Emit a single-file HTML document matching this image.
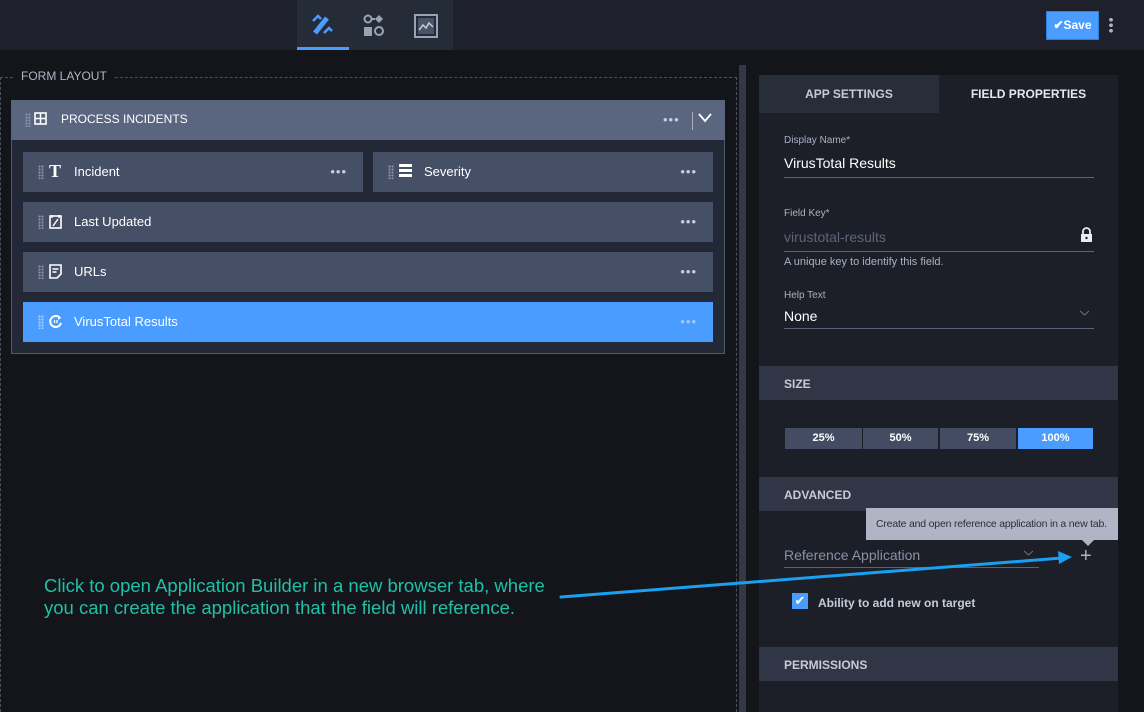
<!DOCTYPE html>
<html style="width:1144px;height:712px;overflow:hidden"><head><style>
*{box-sizing:border-box;margin:0;padding:0}
body{width:1144px;height:712px;background:#14151b;font-family:"Liberation Sans",sans-serif;position:relative;overflow:hidden;color:#fff}
.a{position:absolute}
.row{position:absolute;background:#454f65;height:40px;font-size:13px;display:flex;align-items:center;color:#fff}
.grip{position:absolute;left:15px;top:13px;width:6px;height:14px;background-image:radial-gradient(circle,#8a93a8 1px,transparent 1.2px);background-size:3px 3px}
.dots{position:absolute;right:16px;top:12px;color:#c8cedb;font-size:13px;letter-spacing:1px}
.lbl{position:absolute;left:51px;top:12px}
.hdr{position:absolute;left:759px;width:359px;height:34px;background:#313646;color:#c5cbd8;font-size:12px;font-weight:bold;padding:11px 0 0 25px}
.btn{position:absolute;top:428px;height:21px;background:#434c62;font-size:11px;font-weight:bold;text-align:center;line-height:21px}
.small{font-size:10px;color:#aab1c2;position:absolute;left:784px}
.ul{position:absolute;left:784px;width:310px;height:1px;background:#5a6278}
</style></head><body>
<div class="a" style="left:0;top:0;width:1144px;height:50px;background:#1e212b"></div>
<div class="a" style="left:297px;top:0;width:156px;height:50px;background:#262b38"></div>
<div class="a" style="left:297px;top:47px;width:52px;height:3px;background:#4a9dff"></div>
<svg class="a" style="left:310px;top:13px" width="26" height="24" viewBox="0 0 26 24"><path d="M5 20L17 5" stroke="#4a9dff" stroke-width="5" fill="none"/><path d="M3 8l5-5 3 3M14 20l5-5 3 3" stroke="#4a9dff" stroke-width="2.5" fill="none"/></svg>
<svg class="a" style="left:362px;top:14px" width="24" height="24"><circle cx="6" cy="5" r="3.5" stroke="#9aa3b5" stroke-width="2" fill="none"/><path d="M17 1l4 4-4 4-4-4z" fill="#9aa3b5"/><rect x="2" y="13" width="8" height="9" fill="#9aa3b5"/><circle cx="17" cy="17" r="4" stroke="#9aa3b5" stroke-width="2" fill="none"/><path d="M9 5h4" stroke="#9aa3b5" stroke-width="2"/></svg>
<svg class="a" style="left:414px;top:14px" width="24" height="24"><rect x="1" y="1" width="22" height="22" fill="none" stroke="#9aa3b5" stroke-width="2"/><rect x="4" y="4" width="16" height="16" fill="#4a5468"/><path d="M5 16l4-5 3 3 3-5 4 4" stroke="#c5cbd8" stroke-width="1.5" fill="none"/></svg>
<div class="a" style="left:1046px;top:11px;width:53px;height:29px;background:#4a9dff;border:1px solid #2b7fe0;font-size:12px;font-weight:bold;line-height:27px;text-align:center">✔Save</div>
<div class="a" style="left:1109px;top:17px;width:4px;height:16px;background-image:radial-gradient(circle,#aab1c2 1.8px,transparent 2px);background-size:4px 5.5px"></div>

<div class="a" style="left:0;top:77px;width:737px;height:640px;border:1px dashed #4a4f5e;border-bottom:none"></div>
<div class="a" style="left:15px;top:69px;background:#14151b;padding:0 6px;color:#aeb5c5;font-size:12px">FORM LAYOUT</div>
<div class="a" style="left:739px;top:65px;width:7px;height:647px;background:#333846"></div>

<div class="a" style="left:11px;top:100px;width:714px;height:254px;background:#232837;border:1px solid #4f5970"></div>
<div class="a" style="left:11px;top:100px;width:714px;height:40px;background:#5a6680"></div>
<div class="grip" style="left:25px;top:113px"></div>
<svg class="a" style="left:34px;top:112px" width="13" height="13"><rect x="1" y="1" width="11" height="11" fill="none" stroke="#fff" stroke-width="1.6"/><path d="M6.5 1v11M1 6.5h11" stroke="#fff" stroke-width="1.5"/></svg>
<div class="a" style="left:61px;top:112px;font-size:12px">PROCESS INCIDENTS</div>
<div class="a" style="left:663px;top:112px;color:#c8cedb;font-size:13px;letter-spacing:1px">•••</div>
<div class="a" style="left:692px;top:112px;width:1px;height:18px;background:#aab1c2"></div>
<svg class="a" style="left:698px;top:113px" width="14" height="10"><path d="M1 1l6 7 6-7" stroke="#fff" stroke-width="1.8" fill="none"/></svg>

<div class="row" style="left:23px;top:152px;width:340px"><div class="grip"></div><div class="a" style="left:26px;top:9px;font-family:'Liberation Serif',serif;font-weight:bold;font-size:18px">T</div><div class="lbl">Incident</div><div class="dots">•••</div></div>
<div class="row" style="left:373px;top:152px;width:340px"><div class="grip"></div><div class="a" style="left:26px;top:12px;width:13px;height:15px;background:repeating-linear-gradient(#fff 0 3px,transparent 3px 5px)"></div><div class="lbl">Severity</div><div class="dots">•••</div></div>
<div class="row" style="left:23px;top:202px;width:690px"><div class="grip"></div><svg class="a" style="left:26px;top:12px" width="13" height="15"><rect x="1" y="2" width="11" height="12" fill="none" stroke="#fff" stroke-width="1.6"/><path d="M4 12l5-7M3 1v3M10 1v3" stroke="#fff" stroke-width="1.4"/></svg><div class="lbl">Last Updated</div><div class="dots">•••</div></div>
<div class="row" style="left:23px;top:252px;width:690px"><div class="grip"></div><svg class="a" style="left:26px;top:12px" width="13" height="15"><path d="M1 1h11v9l-4 4H1z" fill="none" stroke="#fff" stroke-width="1.6"/><path d="M3.5 5h6M3.5 8h4" stroke="#fff" stroke-width="1.5"/></svg><div class="lbl">URLs</div><div class="dots">•••</div></div>
<div class="row" style="left:23px;top:302px;width:690px;background:#4a9dff"><div class="grip" style="background-image:radial-gradient(circle,#a8cdf8 1px,transparent 1.2px)"></div><svg class="a" style="left:26px;top:12px" width="14" height="15"><path d="M11 4A5.5 5.5 0 1 0 12 9" fill="none" stroke="#fff" stroke-width="2"/><path d="M9 1l3 3-3 2" fill="#fff"/><path d="M5.5 6v3M8 6v3" stroke="#fff" stroke-width="1.3"/></svg><div class="lbl">VirusTotal Results</div><div class="dots" style="color:#9fc8f8">•••</div></div>

<div class="a" style="left:44px;top:575px;color:#1fc0a8;font-size:18.5px;line-height:22px;white-space:nowrap">Click to open Application Builder in a new browser tab, where<br>you can create the application that the field will reference.</div>

<div class="a" style="left:759px;top:75px;width:359px;height:637px;background:#1c1f28"></div>
<div class="a" style="left:759px;top:75px;width:180px;height:38px;background:#282d3a;color:#c5cbd8;font-size:12px;font-weight:bold;text-align:center;line-height:38px">APP SETTINGS</div>
<div class="a" style="left:939px;top:75px;width:179px;height:38px;color:#e4e8f0;font-size:12px;font-weight:bold;text-align:center;line-height:38px">FIELD PROPERTIES</div>

<div class="small" style="top:135px">Display Name*</div>
<div class="a" style="left:784px;top:155px;font-size:14px">VirusTotal Results</div>
<div class="ul" style="top:177px"></div>
<div class="small" style="top:208px">Field Key*</div>
<div class="a" style="left:784px;top:229px;font-size:14px;color:#5e6578">virustotal-results</div>
<svg class="a" style="left:1080px;top:227px" width="13" height="15"><path d="M3 7V4.5a3.5 3.5 0 0 1 7 0V7" fill="none" stroke="#e8ebf0" stroke-width="1.8"/><rect x="1" y="7" width="11" height="8" fill="#e8ebf0"/><circle cx="6.5" cy="11" r="1.2" fill="#1c1f28"/></svg>
<div class="ul" style="top:251px"></div>
<div class="small" style="top:256px;font-size:11px">A unique key to identify this field.</div>
<div class="small" style="top:290px">Help Text</div>
<div class="a" style="left:784px;top:308px;font-size:14px">None</div>
<svg class="a" style="left:1079px;top:310px" width="11" height="7"><path d="M1 1l4.5 4L10 1" stroke="#6a7286" fill="none"/></svg>
<div class="ul" style="top:328px"></div>

<div class="hdr" style="top:366px">SIZE</div>
<div class="btn" style="left:785px;width:77px">25%</div>
<div class="btn" style="left:863px;width:75px">50%</div>
<div class="btn" style="left:940px;width:76px">75%</div>
<div class="btn" style="left:1018px;width:75px;background:#4a9dff">100%</div>

<div class="hdr" style="top:477px">ADVANCED</div>
<div class="a" style="left:866px;top:508px;width:252px;height:32px;background:#b0b5c5;color:#2b2f3a;font-size:10.5px;padding:10px 0 0 10px;white-space:nowrap;letter-spacing:-0.2px">Create and open reference application in a new tab.</div>
<div class="a" style="left:1082px;top:540px;width:0;height:0;border-left:6px solid transparent;border-right:6px solid transparent;border-top:6px solid #b0b5c5"></div>
<div class="a" style="left:784px;top:547px;font-size:14px;color:#8a91a3">Reference Application</div>
<svg class="a" style="left:1023px;top:550px" width="11" height="7"><path d="M1 1l4.5 4L10 1" stroke="#6a7286" fill="none"/></svg>
<div class="a" style="left:784px;top:567px;width:255px;height:1px;background:#5a6278"></div>
<div class="a" style="left:1080px;top:545px;font-size:20px;color:#aab1c2;font-weight:300">+</div>
<div class="a" style="left:792px;top:593px;width:16px;height:16px;background:#4a9dff;color:#fff;font-size:13px;text-align:center;line-height:16px">✔</div>
<div class="a" style="left:818px;top:596px;font-size:12px;font-weight:bold;color:#c5cbd8">Ability to add new on target</div>

<div class="hdr" style="top:647px">PERMISSIONS</div>

<svg class="a" style="left:0;top:0" width="1144" height="712"><line x1="561" y1="597" x2="1062" y2="558" stroke="#1aa0f0" stroke-width="3" stroke-linecap="round"/><path d="M1072 557l-14-6 1 13z" fill="#1aa0f0"/></svg>
</body></html>
